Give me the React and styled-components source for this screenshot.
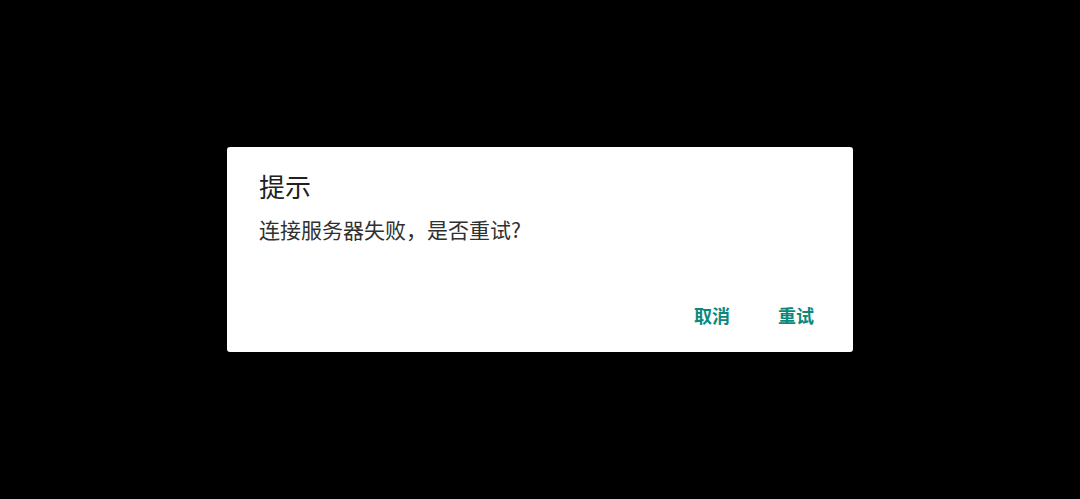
import React from "react";
import styled, { createGlobalStyle } from "styled-components";

const Global = createGlobalStyle`
  html, body { margin: 0; padding: 0; background: #000; }
  body { font-family: "Noto Sans CJK SC", "Noto Sans", sans-serif; }
`;

const Screen = styled.div`
  width: 1080px;
  height: 499px;
  background: #000;
  display: flex;
  align-items: center;
  justify-content: center;
`;

const Dialog = styled.div`
  width: 626px;
  height: 205px;
  box-sizing: border-box;
  background: #fff;
  border-radius: 3px;
  display: flex;
  flex-direction: column;
  padding: 22px 27px 0 32px;
`;

const Title = styled.div`
  font-size: 26px;
  line-height: 34px;
  color: #212121;
  font-weight: 400;
`;

const Message = styled.div`
  margin-top: 12px;
  font-size: 21px;
  line-height: 28px;
  color: #303030;
`;

const Actions = styled.div`
  margin-top: auto;
  margin-bottom: 21px;
  display: flex;
  justify-content: flex-end;
  gap: 24px;
`;

const Button = styled.button`
  border: none;
  background: transparent;
  padding: 0 12px;
  font-family: inherit;
  font-size: 18px;
  line-height: 32px;
  font-weight: 700;
  color: #0b887b;
  cursor: pointer;
`;

export default function App() {
  return (
    <>
      <Global />
      <Screen>
        <Dialog>
          <Title>提示</Title>
          <Message>连接服务器失败，是否重试?</Message>
          <Actions>
            <Button>取消</Button>
            <Button>重试</Button>
          </Actions>
        </Dialog>
      </Screen>
    </>
  );
}
